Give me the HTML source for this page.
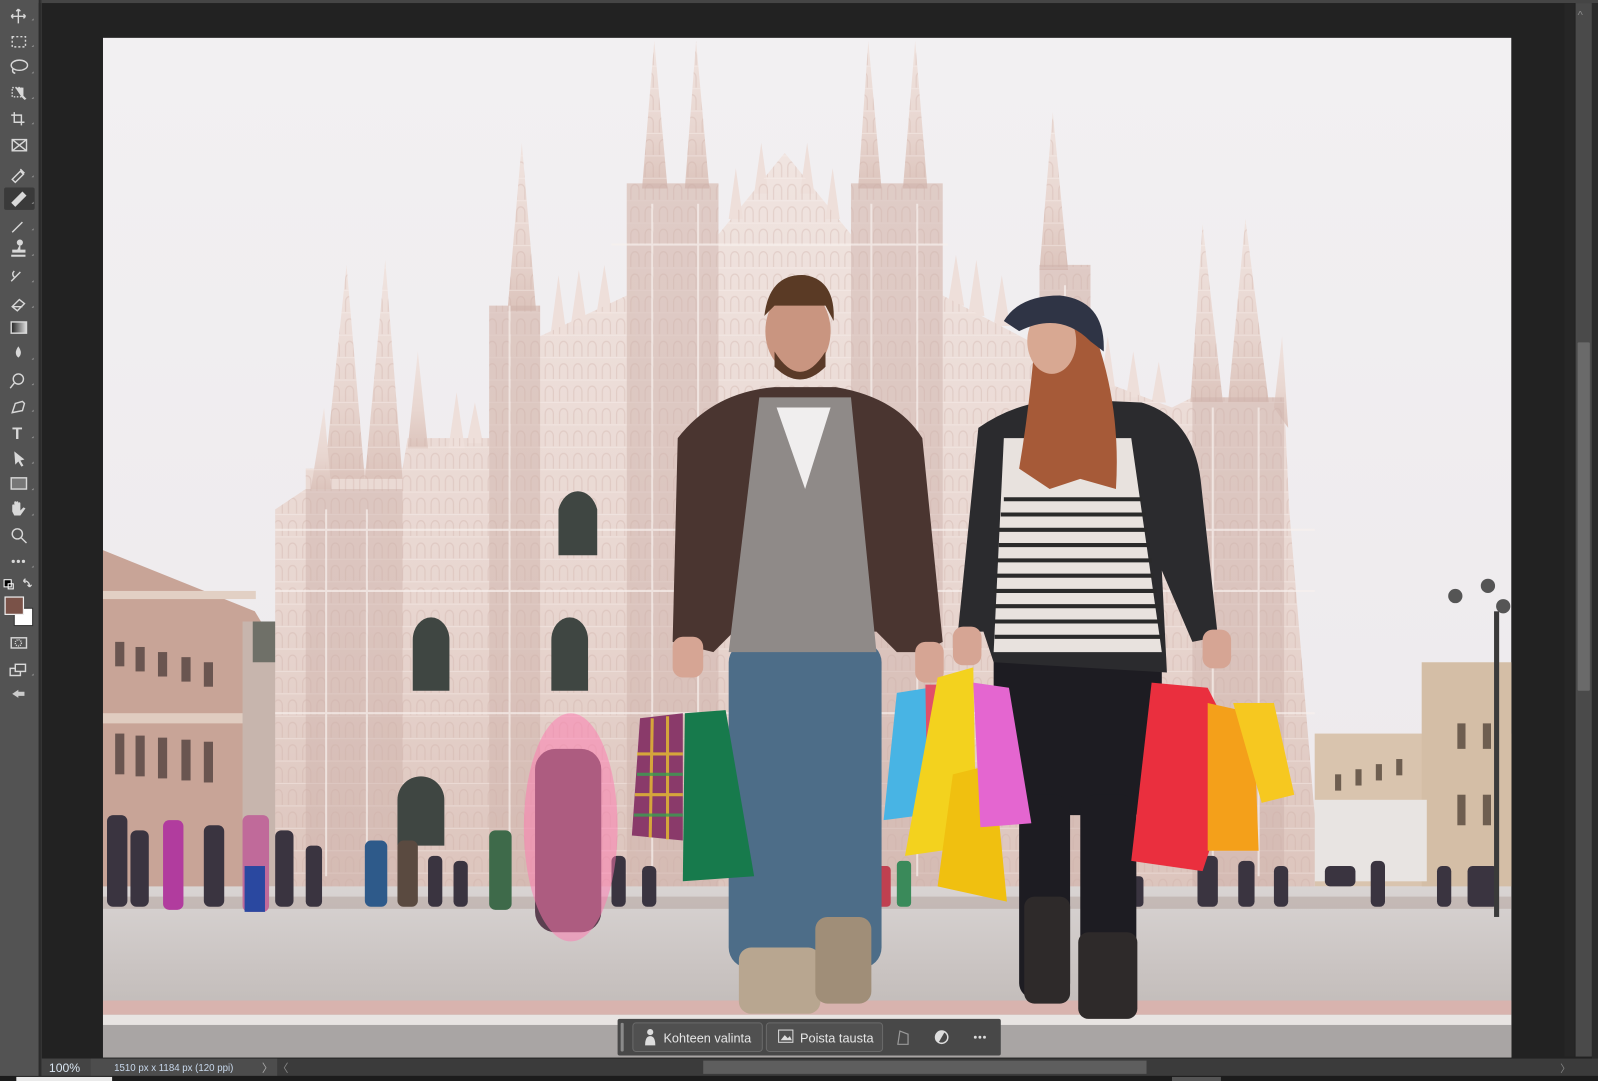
<!DOCTYPE html>
<html><head><meta charset="utf-8"><style>
html,body{margin:0;padding:0;background:#222;overflow:hidden}
svg{display:block}
text{font-family:"Liberation Sans",sans-serif}
</style></head><body>
<svg width="1598" height="1081" viewBox="0 0 1568 1061" preserveAspectRatio="none" xmlns="http://www.w3.org/2000/svg">
<defs>
<linearGradient id="sky" x1="0" y1="0" x2="0" y2="1"><stop offset="0" stop-color="#f2f0f2"/><stop offset="1" stop-color="#ece8eb"/></linearGradient>
<linearGradient id="cath" x1="0" y1="0" x2="0" y2="1"><stop offset="0" stop-color="#f0e4e0"/><stop offset="0.6" stop-color="#e8d6d0"/><stop offset="1" stop-color="#dcc4bc"/></linearGradient>
<linearGradient id="ground" x1="0" y1="0" x2="0" y2="1"><stop offset="0" stop-color="#d9d4d3"/><stop offset="0.5" stop-color="#c9c3c1"/><stop offset="1" stop-color="#b9b3b0"/></linearGradient>
<linearGradient id="grad" x1="0" x2="1"><stop offset="0" stop-color="#222"/><stop offset="1" stop-color="#ddd"/></linearGradient>
<pattern id="tex" width="14" height="22" patternUnits="userSpaceOnUse">
<path d="M3,20 v-10 a4,5 0 0 1 8,0 v10" stroke="#cdaea6" stroke-width="1.2" fill="none"/>
<line x1="0" y1="21" x2="14" y2="21" stroke="#fbf4f1" stroke-width="1"/>
</pattern>
<clipPath id="ph"><rect x="101" y="37" width="1382" height="1001"/></clipPath>
<clipPath id="cb"><polygon points="270,500 300,480 300,460 395,460 400,430 480,430 480,300 530,300 530,330 615,290 615,180 705,180 705,230 770,150 835,230 835,180 925,180 925,290 1020,340 1020,260 1070,260 1070,370 1150,400 1170,390 1260,390 1265,500 1290,800 1290,880 270,880"/>
<polygon points="630,185 642,40 655,185"/><polygon points="672,185 683,40 696,185"/>
<polygon points="842,185 852,40 865,185"/><polygon points="886,185 898,40 910,185"/>
<polygon points="498,305 512,140 526,305"/><polygon points="1020,265 1033,110 1048,265"/>
<polygon points="318,470 340,260 358,470"/><polygon points="358,470 378,255 395,470"/>
<polygon points="1168,395 1180,220 1200,395"/><polygon points="1205,395 1222,215 1245,395"/></clipPath>
</defs>
<rect width="1568" height="1061" fill="#222"/>
<rect x="0" y="0" width="1568" height="3" fill="#454545"/>
<rect x="1535" y="3" width="10" height="1034" fill="#262626"/>
<rect x="1546" y="3" width="16" height="1034" fill="#4a4a4a"/>
<rect x="1548" y="336" width="12" height="342" fill="#6a6a6a" rx="1"/>
<text x="1548" y="18" fill="#888" font-size="11">^</text>
<rect x="1562" y="3" width="6" height="1058" fill="#2a2a2a"/>

<!-- PHOTO -->
<g clip-path="url(#ph)">
<rect x="101" y="37" width="1382" height="1001" fill="url(#sky)"/>
<polygon points="101,540 250,600 262,620 262,880 101,880" fill="#c8a497"/>
<rect x="101" y="580" width="150" height="8" fill="#e2d0c4"/>
<rect x="101" y="700" width="150" height="10" fill="#e0ccc0"/>
<g fill="#6a5550">
<rect x="113" y="630" width="9" height="24"/><rect x="133" y="635" width="9" height="24"/><rect x="155" y="640" width="9" height="24"/><rect x="178" y="645" width="9" height="24"/><rect x="200" y="650" width="9" height="24"/>
<rect x="113" y="720" width="9" height="40"/><rect x="133" y="722" width="9" height="40"/><rect x="155" y="724" width="9" height="40"/><rect x="178" y="726" width="9" height="40"/><rect x="200" y="728" width="9" height="40"/>
</g>
<rect x="238" y="610" width="45" height="260" fill="#c7b5ad"/>
<rect x="248" y="610" width="40" height="40" fill="#6f7068"/>
<rect x="1290" y="720" width="200" height="150" fill="#d9c4ae"/>
<rect x="1395" y="650" width="90" height="220" fill="#d4bea6"/>
<rect x="1290" y="785" width="110" height="80" fill="#e8e4e2"/>
<g fill="#6e5e50"><rect x="1430" y="710" width="8" height="25"/><rect x="1455" y="710" width="8" height="25"/><rect x="1430" y="780" width="8" height="30"/><rect x="1455" y="780" width="8" height="30"/><rect x="1310" y="760" width="6" height="16"/><rect x="1330" y="755" width="6" height="16"/><rect x="1350" y="750" width="6" height="16"/><rect x="1370" y="745" width="6" height="16"/></g>
<!-- cathedral -->
<g fill="url(#cath)">
<polygon points="270,500 300,480 300,460 395,460 400,430 480,430 480,300 530,300 530,330 615,290 615,180 705,180 705,230 770,150 835,230 835,180 925,180 925,290 1020,340 1020,260 1070,260 1070,370 1150,400 1170,390 1260,390 1265,500 1290,800 1290,880 270,880"/>
<polygon points="630,185 642,40 655,185"/><polygon points="672,185 683,40 696,185"/>
<polygon points="842,185 852,40 865,185"/><polygon points="886,185 898,40 910,185"/>
<polygon points="498,305 512,140 526,305"/><polygon points="1020,265 1033,110 1048,265"/>
<polygon points="318,470 340,260 358,470"/><polygon points="358,470 378,255 395,470"/>
<polygon points="1168,395 1180,220 1200,395"/><polygon points="1205,395 1222,215 1245,395"/>
<polygon points="400,440 410,345 420,440"/><polygon points="305,480 318,400 325,480"/>
<polygon points="1250,400 1258,330 1264,420"/>
</g>
<g fill="#eedfda">
<polygon points="440,440 448,385 456,440"/><polygon points="458,435 466,395 474,435"/><polygon points="540,330 548,270 556,330"/><polygon points="560,320 568,265 576,320"/><polygon points="585,310 593,260 601,310"/>
<polygon points="930,300 938,250 946,300"/><polygon points="950,310 958,255 966,310"/><polygon points="975,320 983,270 991,320"/><polygon points="1080,380 1087,330 1094,380"/><polygon points="1105,390 1112,345 1119,390"/><polygon points="1130,395 1137,355 1144,395"/>
<polygon points="715,215 722,165 729,215"/><polygon points="740,190 747,140 754,190"/><polygon points="785,190 792,140 799,190"/><polygon points="810,215 817,165 824,215"/>
</g>
<rect x="270" y="40" width="1020" height="840" fill="url(#tex)" opacity="0.35" clip-path="url(#cb)"/>
<g fill="#cdb0a8" opacity="0.45">
<rect x="300" y="480" width="95" height="390"/><rect x="480" y="300" width="50" height="570"/><rect x="615" y="180" width="90" height="690"/><rect x="835" y="180" width="90" height="690"/><rect x="1020" y="260" width="50" height="610"/><rect x="1170" y="390" width="90" height="480"/>
</g>
<g stroke="#f8f1ee" stroke-width="2" opacity="0.7">
<line x1="320" y1="500" x2="320" y2="860"/><line x1="360" y1="500" x2="360" y2="860"/><line x1="500" y1="300" x2="500" y2="860"/><line x1="640" y1="200" x2="640" y2="860"/><line x1="685" y1="200" x2="685" y2="860"/><line x1="855" y1="200" x2="855" y2="860"/><line x1="900" y1="200" x2="900" y2="860"/><line x1="1045" y1="280" x2="1045" y2="860"/><line x1="1190" y1="400" x2="1190" y2="860"/><line x1="1235" y1="400" x2="1235" y2="860"/>
<line x1="270" y1="520" x2="1290" y2="520"/><line x1="270" y1="580" x2="1290" y2="580"/><line x1="270" y1="700" x2="1290" y2="700"/><line x1="600" y1="240" x2="930" y2="240"/>
</g>
<g fill="#3f4642">
<path d="M405,678 v-50 a18,22 0 0 1 36,0 v50z"/><path d="M541,678 v-50 a18,22 0 0 1 36,0 v50z"/>
<path d="M548,545 v-45 a20,26 0 0 1 38,0 v45z"/>
<path d="M390,830 v-45 a22,22 0 0 1 46,0 v45z"/>
</g>
<rect x="101" y="870" width="1382" height="168" fill="url(#ground)"/>
<rect x="101" y="880" width="1382" height="12" fill="#b8a8a4" opacity="0.6"/>
<rect x="101" y="982" width="1382" height="14" fill="#d8b3ae"/>
<rect x="101" y="996" width="1382" height="10" fill="#e8e4e2"/>
<rect x="101" y="1006" width="1382" height="32" fill="#a9a5a4"/>
<g fill="#3a3440">
<rect x="105" y="800" width="20" height="90" rx="6"/><rect x="128" y="815" width="18" height="75" rx="6"/>
<rect x="160" y="805" width="20" height="88" rx="6" fill="#b13c9e"/><rect x="200" y="810" width="20" height="80" rx="6"/>
<rect x="238" y="800" width="26" height="95" rx="6" fill="#c06a9a"/><rect x="240" y="850" width="20" height="45" fill="#2a48a0"/>
<rect x="270" y="815" width="18" height="75" rx="6"/><rect x="300" y="830" width="16" height="60" rx="5"/>
<rect x="358" y="825" width="22" height="65" rx="6" fill="#2e5a8a"/><rect x="390" y="825" width="20" height="65" rx="6" fill="#5a4a40"/>
<rect x="420" y="840" width="14" height="50" rx="5"/><rect x="445" y="845" width="14" height="45" rx="5"/>
<rect x="480" y="815" width="22" height="78" rx="6" fill="#3e6a4a"/><rect x="575" y="840" width="14" height="50" rx="5"/>
<rect x="600" y="840" width="14" height="50" rx="5"/><rect x="630" y="850" width="14" height="40" rx="5"/>
<rect x="1110" y="860" width="12" height="30" rx="4"/><rect x="1175" y="840" width="20" height="50" rx="5"/><rect x="1215" y="845" width="16" height="45" rx="5"/><rect x="1250" y="850" width="14" height="40" rx="5"/>
<rect x="1300" y="850" width="30" height="20" rx="5"/><rect x="1345" y="845" width="14" height="45" rx="5"/><rect x="1410" y="850" width="14" height="40" rx="5"/><rect x="1440" y="850" width="30" height="40" rx="5"/>
<rect x="860" y="850" width="14" height="40" rx="4" fill="#c04050"/><rect x="880" y="845" width="14" height="45" rx="4" fill="#3a8a5a"/>
</g>
<rect x="525" y="735" width="65" height="180" rx="20" fill="#5a4050"/>
<ellipse cx="560" cy="812" rx="46" ry="112" fill="#ff78b0" opacity="0.5"/>
<rect x="715" y="630" width="150" height="320" rx="20" fill="#4d6d88"/>
<rect x="725" y="930" width="80" height="65" rx="12" fill="#b8a690"/>
<rect x="800" y="900" width="55" height="85" rx="12" fill="#a08e78"/>
<path d="M665,430 Q700,385 760,380 L820,380 Q880,390 905,430 L925,630 L905,640 L880,640 L860,620 L720,620 L700,640 L660,630 Z" fill="#4a3530"/>
<path d="M745,390 L835,390 L860,640 L715,640 Z" fill="#8f8a88"/>
<path d="M762,400 L815,400 L790,480 Z" fill="#f0eeee"/>
<ellipse cx="783" cy="325" rx="32" ry="42" fill="#c99580"/>
<path d="M750,310 Q755,268 790,270 Q820,275 818,315 L810,300 L760,300 Z" fill="#5a3a25"/>
<path d="M760,345 Q785,385 810,345 L810,360 Q785,385 760,360Z" fill="#5a3a28"/>
<rect x="660" y="625" width="30" height="40" rx="10" fill="#d6a594"/><rect x="898" y="630" width="28" height="40" rx="10" fill="#d6a594"/>
<rect x="975" y="600" width="165" height="200" rx="30" fill="#1d1c22"/>
<rect x="1000" y="780" width="50" height="200" rx="15" fill="#1d1c22"/><rect x="1060" y="780" width="55" height="200" rx="15" fill="#1d1c22"/>
<rect x="1005" y="880" width="45" height="105" rx="10" fill="#2e2a2a"/><rect x="1058" y="915" width="58" height="85" rx="10" fill="#2e2a2a"/>
<path d="M960,420 Q1000,392 1050,392 L1120,395 Q1170,410 1178,470 L1195,625 L1170,630 L1140,560 L1145,660 L975,650 L965,620 L940,620 Z" fill="#2b2b2e"/>
<g><path d="M985,430 L1110,430 L1140,640 L975,640 Z" fill="#e8e2de"/>
<g stroke="#2a2a2a" stroke-width="4"><line x1="985" y1="490" x2="1120" y2="490"/><line x1="982" y1="505" x2="1124" y2="505"/><line x1="980" y1="520" x2="1126" y2="520"/><line x1="980" y1="535" x2="1128" y2="535"/><line x1="978" y1="550" x2="1130" y2="550"/><line x1="978" y1="565" x2="1132" y2="565"/><line x1="976" y1="580" x2="1135" y2="580"/><line x1="976" y1="595" x2="1138" y2="595"/><line x1="976" y1="610" x2="1140" y2="610"/><line x1="976" y1="625" x2="1140" y2="625"/></g></g>
<path d="M1015,340 Q1040,310 1075,330 Q1100,400 1095,480 L1060,470 L1030,480 L1000,460 Q1010,400 1015,340Z" fill="#a65a38"/>
<ellipse cx="1032" cy="335" rx="24" ry="32" fill="#d8a892"/>
<path d="M985,315 Q1000,290 1040,290 Q1085,295 1083,345 L1070,335 Q1040,305 1000,325 Z" fill="#2f3445"/>
<rect x="935" y="615" width="28" height="38" rx="10" fill="#d6a594"/><rect x="1180" y="618" width="28" height="38" rx="10" fill="#d6a594"/>
<path d="M628,705 L670,700 L670,825 L620,820 Z" fill="#8a3a6a"/>
<g stroke="#e8c030" stroke-width="3" opacity="0.8"><line x1="625" y1="740" x2="670" y2="740"/><line x1="623" y1="780" x2="670" y2="780"/><line x1="640" y1="705" x2="638" y2="822"/><line x1="655" y1="703" x2="655" y2="824"/></g>
<g stroke="#3aa050" stroke-width="3" opacity="0.8"><line x1="625" y1="760" x2="670" y2="760"/><line x1="622" y1="800" x2="670" y2="800"/></g>
<path d="M672,700 L712,697 L740,860 L670,865 Z" fill="#177a4c"/>
<path d="M880,680 L912,675 L905,800 L867,805 Z" fill="#48b4e4"/>
<path d="M908,672 L930,672 L940,790 L910,790 Z" fill="#e0506a"/>
<path d="M920,665 L955,655 L958,830 L888,840 Z" fill="#f3d21e"/>
<path d="M935,760 L975,750 L988,885 L920,870 Z" fill="#f0c010"/>
<path d="M955,670 L990,675 L1012,808 L962,812 Z" fill="#e466d0"/>
<path d="M1130,670 L1185,675 L1218,740 L1180,855 L1110,845 Z" fill="#ea2f3e"/>
<path d="M1185,690 L1230,700 L1235,835 L1185,835 Z" fill="#f4a01a"/>
<path d="M1210,690 L1250,690 L1270,780 L1238,788 Z" fill="#f6c820"/>
<rect x="1466" y="600" width="5" height="300" fill="#3a3a3a"/>
<circle cx="1428" cy="585" r="7" fill="#555"/><circle cx="1460" cy="575" r="7" fill="#555"/><circle cx="1475" cy="595" r="7" fill="#555"/>
</g>

<!-- TOOLBAR -->
<rect x="0" y="0" width="38" height="1061" fill="#535353"/>
<rect x="38" y="0" width="2" height="1061" fill="#2b2b2b"/>
<rect x="40" y="0" width="1" height="1061" fill="#3a3a3a"/>
<rect x="4" y="184" width="30" height="22" fill="#3a3a3a" rx="2"/>
<g stroke="#d8d8d8" fill="none" stroke-width="1.4">
<path d="M18,9 v14 M11,16 h14 M18,9 l-2,2 M18,9 l2,2 M11,16 l2,-2 M11,16 l2,2 M25,16 l-2,-2 M25,16 l-2,2"/>
<rect x="12" y="36" width="13" height="10" stroke-dasharray="2,2"/>
<ellipse cx="19" cy="64" rx="8" ry="5"/><path d="M13,67 q-2,4 2,5"/>
<rect x="12" y="86" width="9" height="9" stroke-dasharray="1.5,1.5"/>
<path d="M14,110 v10 h10 M11,113 h10 v10"/>
<rect x="12" y="137" width="14" height="11"/><path d="M12,137 l14,11 M26,137 l-14,11"/>
<path d="M12,176 l8,-8 l3,3 l-8,8 z M20,166 l4,4"/>
<path d="M12,228 l10,-10"/>
<path d="M11,276 l9,-9 M14,266 q-3,3 0,6"/>
<path d="M12,301 l7,-7 l5,4 l-7,7 z M12,301 h10"/>
<rect x="11" y="316" width="15" height="11" fill="url(#grad)"/>
<circle cx="18" cy="372" r="5"/><path d="M14,376 l-4,5"/>
<path d="M12,405 l3,-9 l7,-2 l2,2 l-2,7 z"/>
<rect x="11" y="469" width="15" height="11" fill="#777"/>
<circle cx="17" cy="524" r="5"/><path d="M21,528 l5,5"/>
<rect x="11" y="626" width="15" height="10"/><circle cx="18" cy="631" r="3" stroke-dasharray="1,1"/>
<rect x="10" y="656" width="10" height="7"/><rect x="15" y="652" width="10" height="7" fill="#535353"/>
</g>
<g fill="#d8d8d8">
<path d="M15,86 h8 v8 l3,3 l-2,1 l-3,-3 z"/>
<path d="M11,199 l11,-11 l4,4 l-11,11 z"/>
<path d="M19,241 a3,3 0 1 1 1,0 v4 h5 v3 h-13 v-3 h5 z"/><rect x="11" y="250" width="14" height="2"/>
<path d="M18,340 q5,7 0,11 q-5,-4 0,-11z"/>
<text x="12" y="431" font-size="16" font-weight="bold" font-family="Liberation Serif">T</text>
<path d="M14,443 l10,8 l-4,1 l3,5 l-2,1 l-3,-5 l-3,3 z"/>
<path d="M12,502 v-6 a1,1 0 0 1 2,0 v-3 a1,1 0 0 1 2,0 a1,1 0 0 1 2,0 v1 a1,1 0 0 1 2,0 v7 l3,-3 l2,1 l-5,7 h-6 z"/>
<circle cx="13" cy="551" r="1.6"/><circle cx="18" cy="551" r="1.6"/><circle cx="23" cy="551" r="1.6"/>
<path d="M12,681 l6,-4 v2 h6 v4 h-6 v2 z" opacity="0.9"/>
</g>
<rect x="4" y="569" width="7" height="7" fill="#000" stroke="#fff" stroke-width="1"/>
<rect x="8" y="573" width="5" height="5" fill="none" stroke="#fff" stroke-width="1"/>
<path d="M23,570 q6,0 6,6 M23,570 l2,-2 M23,570 l2,2 M29,576 l-2,-2 M29,576 l2,-2" stroke="#d8d8d8" fill="none" stroke-width="1.3"/>
<rect x="14" y="597" width="18" height="17" fill="#fff" stroke="#333" stroke-width="1"/>
<rect x="5" y="586" width="18" height="17" fill="#7a5248" stroke="#eee" stroke-width="1.2"/>
<g fill="#999"><path d="M31,20 l2,0 l0,-2z"/><path d="M31,46 l2,0 l0,-2z"/><path d="M31,72 l2,0 l0,-2z"/><path d="M31,97 l2,0 l0,-2z"/><path d="M31,122 l2,0 l0,-2z"/><path d="M31,174 l2,0 l0,-2z"/><path d="M31,200 l2,0 l0,-2z"/><path d="M31,226 l2,0 l0,-2z"/><path d="M31,251 l2,0 l0,-2z"/><path d="M31,277 l2,0 l0,-2z"/><path d="M31,302 l2,0 l0,-2z"/><path d="M31,353 l2,0 l0,-2z"/><path d="M31,378 l2,0 l0,-2z"/><path d="M31,404 l2,0 l0,-2z"/><path d="M31,430 l2,0 l0,-2z"/><path d="M31,455 l2,0 l0,-2z"/><path d="M31,481 l2,0 l0,-2z"/><path d="M31,506 l2,0 l0,-2z"/><path d="M31,557 l2,0 l0,-2z"/><path d="M31,663 l2,0 l0,-2z"/></g>

<!-- contextual taskbar -->
<rect x="606" y="1000" width="376" height="36" fill="#484848" rx="2"/>
<rect x="609" y="1004" width="3" height="28" fill="#8a8a8a" rx="1"/>
<rect x="621" y="1004" width="127" height="28" fill="#505050" stroke="#6a6a6a" rx="3"/>
<rect x="752" y="1004" width="114" height="28" fill="#505050" stroke="#6a6a6a" rx="3"/>
<g fill="#ddd"><circle cx="638" cy="1013" r="3"/><path d="M633,1026 q0,-9 5,-9 q5,0 5,9z"/>
<rect x="764" y="1011" width="14" height="12" fill="none" stroke="#ddd"/><path d="M766,1021 l4,-5 l3,3 l2,-2 l2,4z"/></g>
<text x="651" y="1023" fill="#e6e6e6" font-size="12.5">Kohteen valinta</text>
<text x="785" y="1023" fill="#e6e6e6" font-size="12.5">Poista tausta</text>
<path d="M881,1025 l2,-13 l8,3 l0,10 z" stroke="#999" fill="none" stroke-width="1.2"/>
<circle cx="924" cy="1018" r="6" fill="none" stroke="#ddd" stroke-width="1.5"/><path d="M924,1012 a6,6 0 0 0 0,12 z" fill="#ddd" transform="rotate(30 924 1018)"/>
<g fill="#ddd"><circle cx="957" cy="1018" r="1.4"/><circle cx="961.5" cy="1018" r="1.4"/><circle cx="966" cy="1018" r="1.4"/></g>

<!-- status bar -->
<rect x="41" y="1039" width="1527" height="17" fill="#3b3b3b"/>
<rect x="41" y="1039" width="48" height="17" fill="#444"/>
<rect x="89" y="1039" width="183" height="17" fill="#4d4d4d"/>
<text x="48" y="1052" fill="#d8e4f0" font-size="12">100%</text>
<text x="112" y="1051" fill="#c8d8ec" font-size="9.5">1510 px x 1184 px (120 ppi)</text>
<text x="257" y="1052" fill="#aaa" font-size="11">〉</text>
<text x="272" y="1052" fill="#888" font-size="11">〈</text>
<rect x="690" y="1041" width="435" height="13" fill="#5e5e5e"/>
<text x="1531" y="1052" fill="#888" font-size="10">〉</text>
<rect x="0" y="1056" width="1568" height="5" fill="#1c1c1c"/>
<rect x="16" y="1057" width="94" height="4" fill="#eaeaea"/>
<rect x="1150" y="1057" width="48" height="4" fill="#555"/>
</svg>
</body></html>
